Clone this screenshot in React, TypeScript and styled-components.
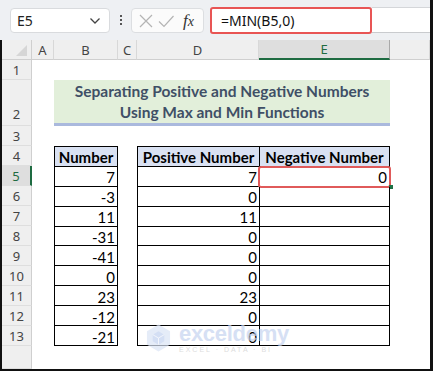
import React from "react";
import styled, { createGlobalStyle } from "styled-components";

const GlobalStyle = createGlobalStyle`
  html, body {
    margin: 0;
    padding: 0;
    background: #ffffff;
  }
  body {
    font-family: "Noto Sans", "Open Sans", sans-serif;
  }
`;

const columns = [
  { key: "A" },
  { key: "B" },
  { key: "C" },
  { key: "D" },
  { key: "E", selected: true },
  { key: "F" },
];

const rowLabels = ["1", "2", "3", "4", "5", "6", "7", "8", "9", "10", "11", "12", "13", ""];

const numbers = [7, -3, 11, -31, -41, 0, 23, -12, -21];
const positives = [7, 0, 11, 0, 0, 0, 23, 0, 0];

const App = () => {
  return (
    <>
      <GlobalStyle />
      <Window>
        <FormulaBar>
          <NameBox>
            <span>E5</span>
            <svg width="12" height="8" viewBox="0 0 12 8">
              <path d="M1.5 1.5 L6 6 L10.5 1.5" fill="none" stroke="#444" strokeWidth="1.3" />
            </svg>
          </NameBox>
          <Dots>
            <i />
            <i />
            <i />
          </Dots>
          <ActionBox>
            <svg width="16" height="16" viewBox="0 0 16 16">
              <path d="M2 2 L14 14 M14 2 L2 14" stroke="#b4b4b4" strokeWidth="1.2" />
            </svg>
            <svg width="18" height="16" viewBox="0 0 18 16">
              <path d="M2 8.5 L7 13.5 L16.5 3" fill="none" stroke="#b4b4b4" strokeWidth="1.2" />
            </svg>
            <FxLabel>
              f<sub>x</sub>
            </FxLabel>
          </ActionBox>
          <FormulaInput>=MIN(B5,0)</FormulaInput>
          <FormulaRest />
        </FormulaBar>

        <Sheet>
          <Corner />
          {columns.map((c) => (
            <ColHeader key={c.key} $selected={c.selected}>
              {c.key !== "F" ? c.key : ""}
            </ColHeader>
          ))}

          {rowLabels.map((r, i) => (
            <RowHeader key={i} $row={i + 2} $selected={r === "5"} $tall={r === "2"}>
              {r}
            </RowHeader>
          ))}

          <TitleCell>
            Separating Positive and Negative Numbers
            <br />
            Using Max and Min Functions
          </TitleCell>

          <DataTable $col="3" $template="1fr">
            <HeadCell>Number</HeadCell>
            {numbers.map((n, i) => (
              <NumCell key={i}>{n}</NumCell>
            ))}
          </DataTable>

          <DataTable $col="5 / 7" $template="122px 1fr">
            <HeadCell>Positive Number</HeadCell>
            <HeadCell>Negative Number</HeadCell>
            {positives.map((p, i) => (
              <React.Fragment key={i}>
                <NumCell>{p}</NumCell>
                <NumCell $active={i === 0}>{i === 0 ? 0 : ""}</NumCell>
              </React.Fragment>
            ))}
          </DataTable>

          <Watermark>
            <svg width="25" height="30" viewBox="0 0 26 30">
              <path d="M13 1 L25 8 L25 22 L13 29 L1 22 L1 8 Z" fill="#dbe4f6" />
              <path d="M13 8 L19 11.5 L19 18.5 L13 22 L7 18.5 L7 11.5 Z" fill="#c3d2f0" />
              <path d="M13 15 L19 11.5 M13 15 L13 22 M13 15 L7 11.5" stroke="#eef2fb" strokeWidth="1" />
            </svg>
            <WatermarkText>
              <strong>exceldemy</strong>
              <small>EXCEL · DATA · BI</small>
            </WatermarkText>
          </Watermark>
        </Sheet>
      </Window>
    </>
  );
};

export default App;

const Window = styled.div`
  width: 433px;
  height: 371px;
  box-sizing: border-box;
  border-right: 3px solid #111;
  border-bottom: 2px solid #111;
  display: flex;
  flex-direction: column;
  overflow: hidden;
  background: #ffffff;
`;

const FormulaBar = styled.div`
  height: 40px;
  flex: none;
  box-sizing: border-box;
  display: flex;
  align-items: center;
  padding: 0 0 0 10px;
  background: #eef0f3;
`;

const NameBox = styled.div`
  width: 100px;
  height: 25px;
  box-sizing: border-box;
  display: flex;
  align-items: center;
  justify-content: space-between;
  padding: 0 8px 0 6px;
  background: #ffffff;
  border: 1px solid #d9dbde;
  border-radius: 4px;
  font-size: 14px;
  color: #222;
  margin-top: 1px;
`;

const Dots = styled.div`
  width: 21px;
  display: flex;
  flex-direction: column;
  align-items: center;
  gap: 2px;

  i {
    display: block;
    width: 2px;
    height: 2px;
    background: #555;
  }
`;

const ActionBox = styled.div`
  width: 73px;
  height: 25px;
  box-sizing: border-box;
  display: flex;
  align-items: center;
  gap: 3px;
  padding: 0 4px 0 6px;
  background: #fbfbfb;
  border: 1px solid #dcdee1;
  border-radius: 4px;
  margin-top: 1px;
`;

const FxLabel = styled.span`
  font-family: "Liberation Serif", "DejaVu Serif", serif;
  font-style: italic;
  font-size: 17px;
  color: #333;
  margin-left: 5px;

  sub {
    font-size: 14px;
    vertical-align: 0;
  }
`;

const FormulaInput = styled.div`
  width: 162px;
  height: 27px;
  margin-left: 6px;
  box-sizing: border-box;
  display: flex;
  align-items: center;
  padding-left: 9px;
  background: #ffffff;
  border: 2px solid #e85555;
  border-radius: 3px;
  font-size: 14px;
  color: #111;
`;

const FormulaRest = styled.div`
  flex: 1;
  height: 26px;
  box-sizing: border-box;
  background: #ffffff;
  border-top: 1px solid #d4d6d9;
  border-bottom: 1px solid #c9cbce;
`;

const Sheet = styled.div`
  flex: 1;
  min-height: 0;
  position: relative;
  display: grid;
  grid-template-columns: 30px 22px 64px 19px 122px 131px 1fr;
  grid-template-rows: 20px 20px 46px 20px repeat(10, 20px) minmax(0, 1fr);
  border-left: 2px solid #111;
  background: #ffffff;
  font-family: "Lato", "Open Sans", sans-serif;
`;

const Corner = styled.div`
  grid-column: 1;
  grid-row: 1;
  position: relative;
  background: #efefef;
  border-right: 1px solid #cfcfcf;
  border-bottom: 1px solid #cfcfcf;

  &::after {
    content: "";
    position: absolute;
    right: 4px;
    bottom: 3px;
    border-style: solid;
    border-width: 0 0 11px 11px;
    border-color: transparent transparent #d6d6d6 transparent;
  }
`;

const ColHeader = styled.div<{ $selected?: boolean }>`
  grid-row: 1;
  box-sizing: border-box;
  display: flex;
  align-items: center;
  justify-content: center;
  font-family: "Noto Sans", "Open Sans", sans-serif;
  font-size: 13px;
  color: ${(p) => (p.$selected ? "#1e6b41" : "#444")};
  background: ${(p) => (p.$selected ? "#dedede" : "#efefef")};
  border-right: 1px solid ${(p) => (p.$selected ? "#a9a9a9" : "#d8d8d8")};
  border-bottom: ${(p) => (p.$selected ? "2px solid #1e6b41" : "1px solid #cfcfcf")};
`;

const RowHeader = styled.div<{ $row: number; $selected?: boolean; $tall?: boolean }>`
  grid-column: 1;
  grid-row: ${(p) => p.$row};
  box-sizing: border-box;
  display: flex;
  align-items: ${(p) => (p.$tall ? "flex-end" : "center")};
  justify-content: center;
  padding-bottom: ${(p) => (p.$tall ? "2px" : "0")};
  font-family: "Noto Sans", "Open Sans", sans-serif;
  font-size: 13px;
  color: ${(p) => (p.$selected ? "#1e6b41" : "#444")};
  background: ${(p) => (p.$selected ? "#dedede" : "#efefef")};
  border-bottom: 1px solid #dedede;
  border-right: ${(p) => (p.$selected ? "2px solid #1e6b41" : "1px solid #cfcfcf")};
`;

const TitleCell = styled.div`
  grid-column: 3 / 7;
  grid-row: 3;
  box-sizing: border-box;
  display: flex;
  align-items: center;
  justify-content: center;
  text-align: center;
  background: #e2efda;
  border-bottom: 3px solid #aab9dd;
  font-weight: 700;
  font-size: 15.5px;
  line-height: 21px;
  color: #3f4f66;
  padding-top: 1px;
`;

const DataTable = styled.div<{ $col: string; $template: string }>`
  grid-column: ${(p) => p.$col};
  grid-row: 5 / 15;
  min-height: 0;
  display: grid;
  grid-template-columns: ${(p) => p.$template};
  grid-template-rows: repeat(10, minmax(0, 1fr));
  box-sizing: border-box;
  border-top: 1px solid #000;
  border-left: 1px solid #000;
`;

const HeadCell = styled.div`
  box-sizing: border-box;
  min-height: 0;
  display: flex;
  align-items: center;
  justify-content: center;
  background: #d9e1f2;
  border-right: 1px solid #000;
  border-bottom: 1px solid #000;
  font-weight: 700;
  font-size: 15px;
  line-height: 18px;
  color: #000;
  white-space: nowrap;
  padding-top: 1px;
`;

const NumCell = styled.div<{ $active?: boolean }>`
  position: relative;
  box-sizing: border-box;
  min-height: 0;
  display: flex;
  align-items: center;
  justify-content: flex-end;
  padding: 2px 2px 0 0;
  border-right: 1px solid #000;
  border-bottom: 1px solid #000;
  font-size: 15px;
  line-height: 16px;
  color: #000;

  ${(p) =>
    p.$active &&
    `
    &::before {
      content: "";
      position: absolute;
      left: -2px;
      right: -2px;
      top: -1px;
      bottom: -2px;
      border: 2px solid #e05a5a;
      border-radius: 3px;
    }
    &::after {
      content: "";
      position: absolute;
      right: -4px;
      bottom: -3px;
      width: 4px;
      height: 4px;
      background: #1e7145;
    }
  `}
`;

const Watermark = styled.div`
  position: absolute;
  left: 144px;
  top: 283px;
  display: flex;
  align-items: center;
  gap: 8px;
  opacity: 0.7;
  pointer-events: none;
`;

const WatermarkText = styled.div`
  display: flex;
  flex-direction: column;
  font-family: "Liberation Sans", Arial, sans-serif;

  strong {
    font-size: 22px;
    line-height: 22px;
    font-weight: 700;
    color: #c5d3f0;
    letter-spacing: -0.3px;
  }

  small {
    font-size: 7px;
    letter-spacing: 2px;
    color: #cfcfcf;
    margin-top: 1px;
  }
`;
